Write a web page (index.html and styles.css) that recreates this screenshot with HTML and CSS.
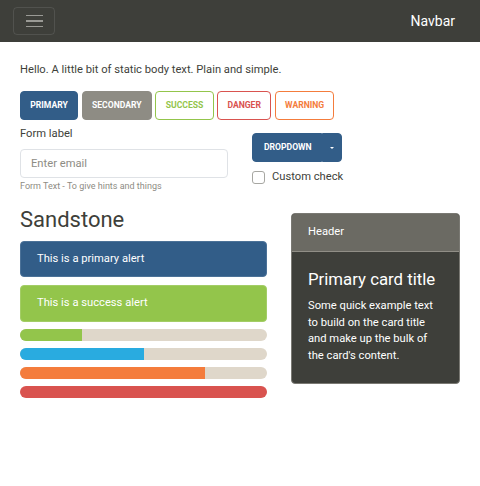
FILE: index.html
```html
<!DOCTYPE html>
<html lang="en">
<head>
<meta charset="utf-8">
<title>Sandstone</title>
<link rel="stylesheet" href="styles.css">
</head>
<body>
<nav class="navbar">
  <button class="toggler" type="button" aria-label="Toggle navigation">
    <span class="toggler-bar"></span>
    <span class="toggler-bar"></span>
    <span class="toggler-bar"></span>
  </button>
  <a class="brand" href="#">Navbar</a>
</nav>
<main class="container">
  <p class="intro">Hello. A little bit of static body text. Plain and simple.</p>
  <div class="btn-row">
    <button class="btn btn-primary">Primary</button>
    <button class="btn btn-secondary">Secondary</button>
    <button class="btn btn-outline-success">Success</button>
    <button class="btn btn-outline-danger">Danger</button>
    <button class="btn btn-outline-warning">Warning</button>
  </div>
  <div class="row row-form">
    <div class="col">
      <label class="form-label" for="email">Form label</label>
      <input class="form-control" id="email" type="email" placeholder="Enter email">
      <div class="form-text">Form Text - To give hints and things</div>
    </div>
    <div class="col col-right">
      <div class="btn-group">
        <button class="btn btn-primary btn-split-main">Dropdown</button>
        <button class="btn btn-primary btn-split-toggle" aria-label="Toggle dropdown"><span class="caret"></span></button>
      </div>
      <label class="form-check">
        <span class="check-box"></span>
        <span class="check-label">Custom check</span>
      </label>
    </div>
  </div>
  <div class="row row-main">
    <div class="col">
      <h2 class="title">Sandstone</h2>
      <div class="alert alert-primary">This is a primary alert</div>
      <div class="alert alert-success">This is a success alert</div>
      <div class="progress"><div class="progress-bar bar-success" style="width: 25%"></div></div>
      <div class="progress"><div class="progress-bar bar-info" style="width: 50%"></div></div>
      <div class="progress"><div class="progress-bar bar-warning" style="width: 75%"></div></div>
      <div class="progress"><div class="progress-bar bar-danger" style="width: 100%"></div></div>
    </div>
    <div class="col">
      <div class="card">
        <div class="card-header">Header</div>
        <div class="card-body">
          <h4 class="card-title">Primary card title</h4>
          <p class="card-text">Some quick example text to build on the card title and make up the bulk of the card's content.</p>
        </div>
      </div>
    </div>
  </div>
</main>
</body>
</html>
```

FILE: styles.css
```css
* { box-sizing: border-box; }

html, body {
  margin: 0;
  padding: 0;
  background: #ffffff;
}

body {
  font-family: Roboto, "Liberation Sans", sans-serif;
  font-size: 11.2px;
  line-height: 1.5;
  color: #3e3f3a;
}

.navbar {
  height: 42px;
  background: #3e3f3a;
  display: flex;
  align-items: center;
  justify-content: space-between;
  padding: 0 25px 0 13px;
}

.toggler {
  width: 42px;
  height: 28px;
  border: 1px solid rgba(255, 255, 255, 0.1);
  border-radius: 4px;
  background: transparent;
  display: flex;
  flex-direction: column;
  align-items: center;
  justify-content: center;
  gap: 4px;
  padding: 0;
}

.toggler-bar {
  display: block;
  width: 17px;
  height: 1.5px;
  background: #9a9a95;
}

.brand {
  color: #ffffff;
  text-decoration: none;
  font-size: 14px;
  line-height: 1;
}

.container {
  padding: 20px 20px;
}

.intro {
  margin: 0 0 12.5px;
  line-height: 16.5px;
}

.btn-row {
  display: flex;
  gap: 3.5px;
}

.btn {
  font-family: Roboto, "Liberation Sans", sans-serif;
  font-size: 8.6px;
  font-weight: 700;
  text-transform: uppercase;
  height: 29px;
  padding: 0 9.3px;
  border: 1px solid transparent;
  border-radius: 4px;
  background: transparent;
  line-height: 1;
}

.btn-primary { background: #325d88; border-color: #325d88; color: #fff; }
.btn-secondary { background: #8e8c84; border-color: #8e8c84; color: #fff; }
.btn-outline-success { color: #93c54b; border-color: #93c54b; }
.btn-outline-danger { color: #d9534f; border-color: #d9534f; }
.btn-outline-warning { color: #f47c3c; border-color: #f47c3c; }

.row {
  display: grid;
  column-gap: 24px;
}

.row-form {
  grid-template-columns: 1fr 1fr;
  margin-top: 5.5px;
}

.row-main {
  grid-template-columns: 247px 1fr;
  margin-top: 14px;
}

.form-label {
  display: block;
  line-height: 16.5px;
  margin-bottom: 7px;
}

.form-control {
  display: block;
  width: 100%;
  height: 29px;
  padding: 0 10px;
  font-family: Roboto, "Liberation Sans", sans-serif;
  font-size: 11.2px;
  color: #3e3f3a;
  border: 1px solid #dfe2e6;
  border-radius: 4px;
  background: #fff;
}

.form-control::placeholder { color: #8e8c84; }

.form-text {
  margin-top: 2px;
  font-size: 9px;
  line-height: 13.2px;
  color: #8e8c84;
}

.col-right {
  padding-top: 7.5px;
}

.btn-group {
  display: inline-flex;
}

.btn-split-main {
  border-top-right-radius: 0;
  border-bottom-right-radius: 0;
  padding: 0 10px 0 11px;
  width: 70px;
}

.btn-split-toggle {
  border-top-left-radius: 0;
  border-bottom-left-radius: 0;
  width: 20px;
  padding: 0;
  display: flex;
  align-items: center;
  justify-content: center;
}

.caret {
  display: block;
  width: 0;
  height: 0;
  border-top: 2.4px solid #fff;
  border-left: 2.4px solid transparent;
  border-right: 2.4px solid transparent;
}

.form-check {
  display: flex;
  align-items: center;
  gap: 7px;
  margin-top: 7px;
  line-height: 16.5px;
}

.check-box {
  width: 13px;
  height: 13px;
  border: 1px solid #a7a7a2;
  border-radius: 3px;
  background: #fff;
}

.title {
  font-size: 22px;
  font-weight: 400;
  line-height: 1.2;
  margin: 0 0 7px;
}

.alert {
  padding: 9px 16px;
  border: 1px solid transparent;
  border-radius: 4px;
  color: #fff;
  line-height: 16.5px;
  margin-bottom: 8px;
}

.alert-primary { background: #325d88; border-color: #4c7298; }
.alert-success { background: #93c54b; border-color: #a3cd66; }

.alert + .progress { margin-top: -1px; }

.progress {
  height: 12.5px;
  border-radius: 7px;
  background: #dfd7ca;
  overflow: hidden;
  margin-bottom: 6.5px;
}

.progress-bar { height: 100%; }
.bar-success { background: #93c54b; }
.bar-info { background: #29abe0; }
.bar-warning { background: #f47c3c; }
.bar-danger { background: #d9534f; }

.card {
  margin-top: 6px;
  background: #3e3f3a;
  border: 1px solid #7a7973;
  border-radius: 4px;
  color: #fff;
  overflow: hidden;
}

.card-header {
  background: #6b6a63;
  border-bottom: 1px solid #908e86;
  padding: 10px 16px;
  line-height: 16.5px;
}

.card-body {
  padding: 17px 16px 18px;
}

.card-title {
  margin: 0 0 9px;
  font-size: 16.8px;
  font-weight: 400;
  line-height: 1.2;
}

.card-text {
  margin: 0;
  line-height: 16.8px;
}
```
